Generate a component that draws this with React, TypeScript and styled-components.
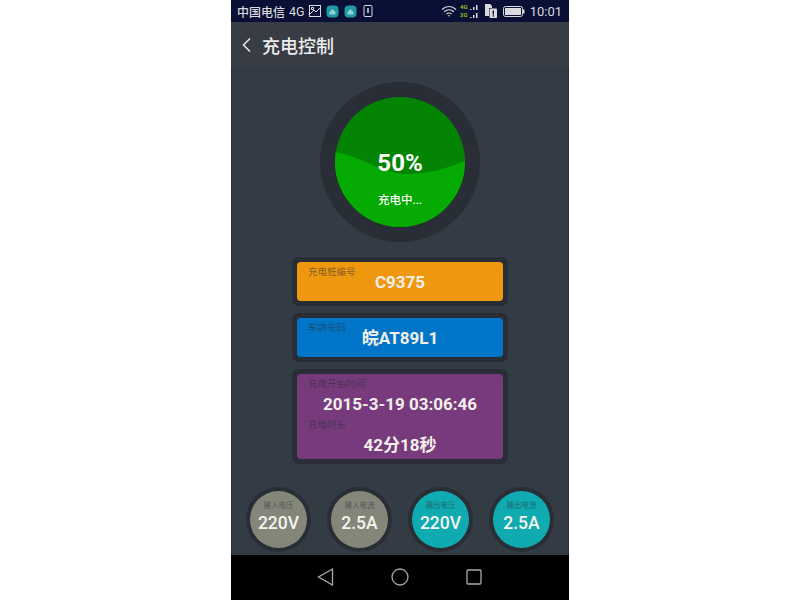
import React from "react";
import styled, { createGlobalStyle } from "styled-components";

const GlobalStyle = createGlobalStyle`
  html, body {
    margin: 0;
    padding: 0;
    background: #fff;
  }
`;

const font = `Roboto, "Noto Sans CJK SC", sans-serif`;

const Page = styled.div`
  width: 800px;
  height: 600px;
  display: flex;
  justify-content: center;
  overflow: hidden;
  font-family: ${font};
`;

const Phone = styled.div`
  width: 338px;
  height: 600px;
  display: flex;
  flex-direction: column;
`;

const StatusBar = styled.div`
  height: 22px;
  background: #0a0f35;
  color: #d8dade;
  display: flex;
  align-items: center;
  justify-content: space-between;
  padding: 0 7px 0 6px;
`;

const StatusGroup = styled.div`
  display: flex;
  align-items: center;
`;

const Carrier = styled.span`
  font-size: 12px;
  font-weight: 500;
  margin-right: 4px;
`;

const Network = styled.span`
  font-size: 12.5px;
  margin-right: 4px;
`;

const Time = styled.span`
  font-size: 13px;
  margin-left: 5px;
`;

const Header = styled.div`
  height: 45px;
  background: #383c44;
  color: #eceded;
  display: flex;
  align-items: center;
  padding-left: 10px;
  font-size: 18px;
  font-weight: 500;
  gap: 10px;
`;

const Content = styled.div`
  flex: 1;
  background: #333b45;
  display: flex;
  flex-direction: column;
  align-items: center;
  padding-top: 15px;
  border-left: 1px solid #2a3038;
  border-right: 1px solid #2a3038;
`;

const GaugeRing = styled.div`
  width: 160px;
  height: 160px;
  box-sizing: border-box;
  border-radius: 50%;
  background: #292e36;
  padding: 15px;
`;

const Gauge = styled.div`
  position: relative;
  width: 130px;
  height: 130px;
  border-radius: 50%;
  overflow: hidden;
  background: #038503;
  color: #fff;
`;

const Wave = styled.svg`
  position: absolute;
  inset: 0;
`;

const GaugeText = styled.div`
  position: relative;
  display: flex;
  flex-direction: column;
  align-items: center;
`;

const Percent = styled.div`
  margin-top: 51px;
  font-size: 24px;
  line-height: 30px;
  font-weight: 700;
`;

const GaugeStatus = styled.div`
  margin-top: 14px;
  font-size: 11.5px;
  line-height: 16px;
  font-weight: 500;
`;

const InfoCard = styled.div<{ $top: number }>`
  width: 216px;
  box-sizing: border-box;
  padding: 5px;
  background: #292e36;
  border-radius: 7px;
  margin-top: ${(p) => p.$top}px;
`;

const InfoBody = styled.div<{ $color: string; $height: number }>`
  height: ${(p) => p.$height}px;
  background: ${(p) => p.$color};
  border-radius: 4px;
  padding: 4px 11px 0;
  box-sizing: border-box;
  display: flex;
  flex-direction: column;
`;

const InfoLabel = styled.div`
  font-size: 9.5px;
  line-height: 12px;
  color: rgba(40, 45, 55, 0.55);
`;

const InfoValue = styled.div`
  font-size: 17px;
  line-height: 20px;
  font-weight: 700;
  color: #f2efe9;
  text-align: center;
  margin-top: -6px;
`;

const TallValue = styled(InfoValue)`
  margin-top: 4px;
  margin-bottom: 5px;
`;

const Meters = styled.div`
  margin-top: 23px;
  display: flex;
  gap: 16px;
`;

const MeterRing = styled.div`
  width: 65px;
  height: 65px;
  box-sizing: border-box;
  padding: 4px;
  border-radius: 50%;
  background: #292e36;
`;

const MeterFace = styled.div<{ $color: string }>`
  height: 57px;
  border-radius: 50%;
  background: ${(p) => p.$color};
  display: flex;
  flex-direction: column;
  align-items: center;
  padding-top: 10px;
  box-sizing: border-box;
`;

const MeterLabel = styled.div`
  font-size: 7.5px;
  line-height: 10px;
  color: rgba(40, 45, 55, 0.55);
`;

const MeterValue = styled.div`
  font-size: 17.5px;
  line-height: 20px;
  margin-top: 2px;
  font-weight: 500;
  color: #f4f4ef;
`;

const NavBar = styled.div`
  height: 45px;
  box-sizing: border-box;
  padding: 0 2px 1px 0;
  background: #000;
  display: flex;
  align-items: center;
  justify-content: center;
  gap: 57px;
`;

const meters = [
  { label: "输入电压", value: "220V", color: "#84867a" },
  { label: "输入电流", value: "2.5A", color: "#84867a" },
  { label: "输出电压", value: "220V", color: "#0fabb0" },
  { label: "输出电流", value: "2.5A", color: "#0fabb0" },
];

const AppDot = () => (
  <svg width="13" height="13" viewBox="0 0 13 13" style={{ marginLeft: 5 }}>
    <rect x="0.5" y="0.5" width="12" height="12" rx="4" fill="#1f9aa5" />
    <path d="M3.5 7 L6.5 4 L9.5 7 V9.5 H3.5Z" fill="#8fd0d4" />
  </svg>
);

const App = () => (
  <Page>
    <GlobalStyle />
    <Phone>
      <StatusBar>
        <StatusGroup>
          <Carrier>中国电信</Carrier>
          <Network>4G</Network>
          <svg width="12" height="12" viewBox="0 0 12 12" fill="none" stroke="#d8dade">
            <rect x="0.5" y="0.5" width="11" height="11" />
            <path d="M1 9 L5 5 L7 7 L11 3" />
            <path d="M2.5 2.5h2v2h-2z" />
          </svg>
          <AppDot />
          <AppDot />
          <svg width="10" height="12" viewBox="0 0 10 12" style={{ marginLeft: 6 }} fill="none" stroke="#d8dade">
            <rect x="1" y="0.5" width="8" height="11" rx="1" />
            <path d="M5 3 V8" strokeWidth="1.5" />
          </svg>
        </StatusGroup>
        <StatusGroup>
          <svg width="16" height="12" viewBox="0 0 16 12" fill="none" stroke="#d8dade" strokeWidth="1.2">
            <path d="M1 4.5 C5 0.5 11 0.5 15 4.5" />
            <path d="M3.2 6.8 C6 4.2 10 4.2 12.8 6.8" />
            <path d="M5.5 9 C7 7.8 9 7.8 10.5 9" />
            <circle cx="8" cy="10.8" r="0.8" fill="#d8dade" stroke="none" />
          </svg>
          <svg width="20" height="16" viewBox="0 0 20 16" style={{ marginLeft: 3 }}>
            <text x="0" y="6" fontSize="6" fontWeight="700" fill="#8fc31f" fontFamily="Roboto, sans-serif">4G</text>
            <text x="0" y="14" fontSize="6" fontWeight="700" fill="#8fc31f" fontFamily="Roboto, sans-serif">2G</text>
            <path d="M10 6h1.5v1H10zM13 4h1.5v3H13zM16 2h1.5v5H16zM10 14h1.5v1H10zM13 12h1.5v3H13zM16 10h1.5v5H16z" fill="#d8dade" />
          </svg>
          <svg width="14" height="16" viewBox="0 0 14 16" style={{ marginLeft: 4 }}>
            <path d="M1 1 H6 L8 3 V5 H5 V13 H1Z" fill="#d8dade" />
            <rect x="5.5" y="5.5" width="7.5" height="9.5" rx="1" fill="#d8dade" />
            <rect x="8.6" y="7.5" width="1.4" height="4" fill="#0a0f35" />
            <rect x="8.6" y="12.2" width="1.4" height="1.4" fill="#0a0f35" />
          </svg>
          <svg width="22" height="11" viewBox="0 0 22 11" style={{ marginLeft: 5 }}>
            <rect x="0.5" y="0.5" width="19" height="10" rx="2" fill="none" stroke="#d8dade" />
            <rect x="2" y="2" width="16" height="7" fill="#d8dade" />
            <rect x="20" y="3.5" width="1.5" height="4" fill="#d8dade" />
          </svg>
          <Time>10:01</Time>
        </StatusGroup>
      </StatusBar>
      <Header>
        <svg width="11" height="16" viewBox="0 0 11 16" fill="none" stroke="#e4e5e6" strokeWidth="1.6">
          <path d="M9 1.5 L2.5 8 L9 14.5" />
        </svg>
        充电控制
      </Header>
      <Content>
        <GaugeRing>
          <Gauge>
            <Wave width="130" height="130" viewBox="0 0 130 130">
              <path d="M0 55 C 28 60, 48 77, 72 77 C 93 77, 112 71, 130 64 L130 130 L0 130Z" fill="#05aa03" />
            </Wave>
            <GaugeText>
              <Percent>50%</Percent>
              <GaugeStatus>充电中...</GaugeStatus>
            </GaugeText>
          </Gauge>
        </GaugeRing>
        <InfoCard $top={15}>
          <InfoBody $color="#ef980f" $height={39}>
            <InfoLabel>充电桩编号</InfoLabel>
            <InfoValue>C9375</InfoValue>
          </InfoBody>
        </InfoCard>
        <InfoCard $top={7}>
          <InfoBody $color="#0176c8" $height={39}>
            <InfoLabel>车牌号码</InfoLabel>
            <InfoValue>皖AT89L1</InfoValue>
          </InfoBody>
        </InfoCard>
        <InfoCard $top={7}>
          <InfoBody $color="#763a7d" $height={85}>
            <InfoLabel>充电开始时间</InfoLabel>
            <TallValue>2015-3-19 03:06:46</TallValue>
            <InfoLabel>充电时长</InfoLabel>
            <TallValue>42分18秒</TallValue>
          </InfoBody>
        </InfoCard>
        <Meters>
          {meters.map((m) => (
            <MeterRing key={m.label}>
              <MeterFace $color={m.color}>
                <MeterLabel>{m.label}</MeterLabel>
                <MeterValue>{m.value}</MeterValue>
              </MeterFace>
            </MeterRing>
          ))}
        </Meters>
      </Content>
      <NavBar>
        <svg width="17" height="18" viewBox="0 0 17 18" fill="none" stroke="#a9a9a9" strokeWidth="1.3">
          <path d="M15.5 1 L1.5 9 L15.5 17Z" />
        </svg>
        <svg width="18" height="18" viewBox="0 0 18 18" fill="none" stroke="#a9a9a9" strokeWidth="1.3">
          <circle cx="9" cy="9" r="8" />
        </svg>
        <svg width="16" height="16" viewBox="0 0 16 16" fill="none" stroke="#a9a9a9" strokeWidth="1.3">
          <rect x="1" y="1" width="14" height="14" rx="1" />
        </svg>
      </NavBar>
    </Phone>
  </Page>
);

export default App;
